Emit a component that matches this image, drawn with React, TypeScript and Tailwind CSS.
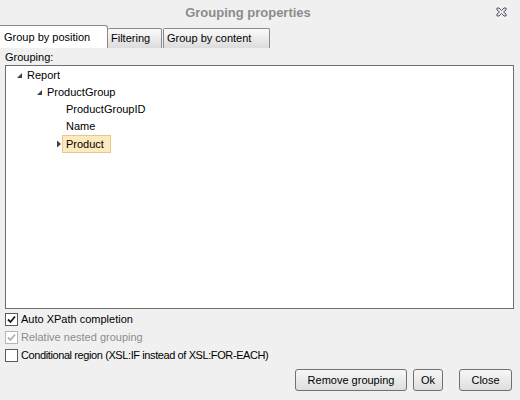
import React from "react";

function Check({ checked, disabled }: { checked?: boolean; disabled?: boolean }) {
  return (
    <span
      className={
        "w-[13px] h-[13px] flex items-center justify-center bg-white border " +
        (disabled ? "border-[#b5b5b5]" : "border-[#5a5a5a]")
      }
    >
      {checked && (
        <svg width="9" height="9" viewBox="0 0 9 9">
          <path
            d="M1 4.5 L3.5 7 L8 1.5"
            fill="none"
            stroke={disabled ? "#b0b0b0" : "#1a1a1a"}
            strokeWidth="1.8"
          />
        </svg>
      )}
    </span>
  );
}

function Btn({ label, w }: { label: string; w: string }) {
  return (
    <button
      className={
        w +
        " h-[22px] border border-[#707070] rounded-[3px] bg-gradient-to-b from-[#f7f7f7] to-[#dedede] text-[11px] text-black flex items-center justify-center"
      }
    >
      {label}
    </button>
  );
}

function Down() {
  return (
    <svg width="7" height="7" viewBox="0 0 7 7">
      <path d="M6 1 L6 6 L1 6 Z" fill="#404040" />
    </svg>
  );
}

export default function App() {
  return (
    <div
      className="w-[520px] h-[400px] bg-[#f0f0f0] flex flex-col text-[11px] text-black overflow-hidden"
      style={{ fontFamily: '"Liberation Sans", Arial, sans-serif' }}
    >
      <div className="h-[25px] relative flex items-center justify-center">
        <span className="font-bold text-[13px] text-[#8c8c8c] ml-[-24px]">Grouping properties</span>
        <svg className="absolute right-[13px] top-[7px]" width="11" height="10" viewBox="0 0 11 10">
          <path
            d="M1 1 H3 L5.5 3.5 L8 1 H10 V3 L7.5 5 L10 7 V9 H8 L5.5 6.5 L3 9 H1 V7 L3.5 5 L1 3 Z"
            fill="none"
            stroke="#505060"
            strokeWidth="1"
          />
        </svg>
      </div>
      <div className="flex items-end h-[23px] pl-[0px]">
        <div className="w-[108px] h-[23px] bg-white border border-b-0 border-[#8a8a8a] rounded-tr-[3px] flex items-center pl-[4px] border-l-0">
          Group by position
        </div>
        <div className="w-[54px] h-[20px] bg-gradient-to-b from-[#fbfbfb] to-[#dcdcdc] border border-b-0 border-[#8a8a8a] rounded-t-[2px] flex items-center pl-[3px] border-l-0">
          Filtering
        </div>
        <div className="w-[107px] h-[20px] bg-gradient-to-b from-[#fbfbfb] to-[#dcdcdc] border border-b-0 border-[#8a8a8a] rounded-t-[2px] flex items-center pl-[3px] ml-[1px] border-l-[#8a8a8a]">
          Group by content
        </div>
      </div>
      <div className="px-[5px] pt-[2px] flex flex-col">
        <div className="h-[15px] leading-[15px]">Grouping:</div>
        <div className="h-[244px] w-[509px] bg-white border border-[#6e6e6e] pt-[1px]">
          <div className="h-[17px] flex items-center pl-[10px] gap-[4px]">
            <Down />
            <span>Report</span>
          </div>
          <div className="h-[17px] flex items-center pl-[30px] gap-[4px]">
            <Down />
            <span>ProductGroup</span>
          </div>
          <div className="h-[17px] flex items-center pl-[60px]">ProductGroupID</div>
          <div className="h-[17px] flex items-center pl-[60px]">Name</div>
          <div className="h-[18px] flex items-center pl-[50px] gap-[0px]">
            <svg width="6" height="8" viewBox="0 0 6 8">
              <path d="M1 0.5 L5 4 L1 7.5 Z" fill="#404040" />
            </svg>
            <span className="h-[18px] w-[49px] px-[3px] flex items-center bg-[#fde9bd] border border-[#e8c889]">
              Product
            </span>
          </div>
        </div>
        <div className="flex flex-col mt-[1px]">
          <div className="h-[18px] flex items-center gap-[3px]">
            <Check checked />
            <span>Auto XPath completion</span>
          </div>
          <div className="h-[18px] flex items-center gap-[3px] text-[#8d8d8d]">
            <Check checked disabled />
            <span>Relative nested grouping</span>
          </div>
          <div className="h-[18px] flex items-center gap-[3px]">
            <Check />
            <span className="tracking-[-0.4px]">Conditional region (XSL:IF instead of XSL:FOR-EACH)</span>
          </div>
        </div>
        <div className="flex justify-end mt-[5px] pr-[3px]">
          <Btn label="Remove grouping" w="w-[112px]" />
          <Btn label="Ok" w="w-[30px] ml-[6px]" />
          <Btn label="Close" w="w-[53px] ml-[16px]" />
        </div>
      </div>
    </div>
  );
}
